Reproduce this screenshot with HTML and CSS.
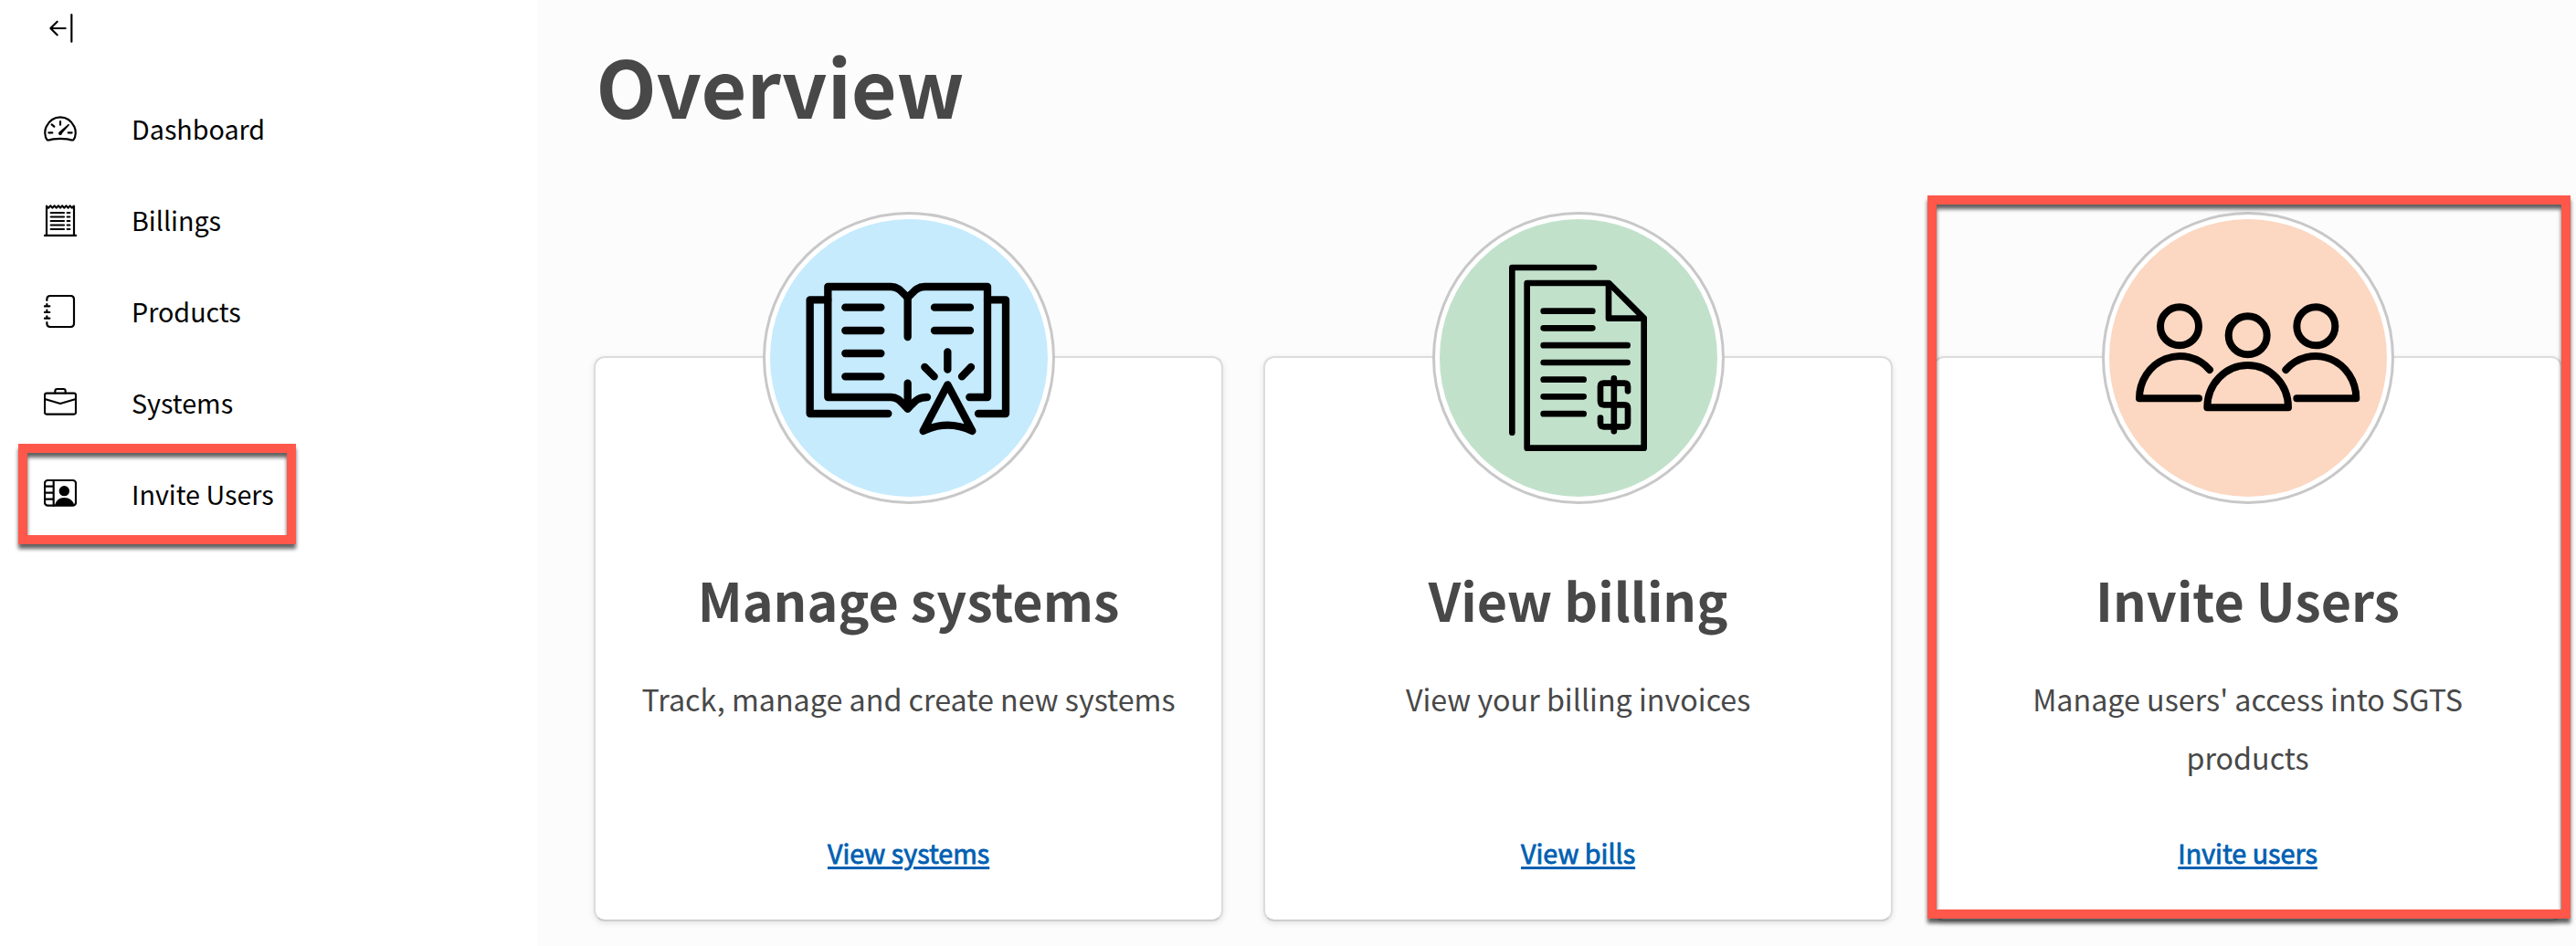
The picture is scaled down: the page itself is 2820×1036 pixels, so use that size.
FILE: index.html
```html
<!DOCTYPE html>
<html lang="en">
<head>
<meta charset="utf-8">
<title>Overview</title>
<link rel="stylesheet" href="styles.css">
</head>
<body>
<div class="layout">
  <aside class="sidebar">
    <button class="toggle" type="button" aria-label="Collapse menu">
      <svg class="nav-icon" viewBox="144 39 108 108"><path d="M215 93H166M188 71L166 93L188 115M235 48V137"/></svg>
    </button>
    <nav class="nav">
      <a class="nav-item">
        <svg class="nav-icon" viewBox="144 369 108 108">
          <path d="M155 460C146 450 146 428 152 416C162 396 179 385 198 385C217 385 234 396 244 416C250 428 250 450 241 460C237 462 228 458 222 457C206 455 190 455 174 457C168 458 159 462 155 460Z"/>
          <path d="M198 399V410M170 409L178 416M160 436H172M224 436H236"/>
          <path class="solid" d="M225 407Q230 408 227 412L204 438A6 6 0 1 1 195 433Z"/>
        </svg>
        <span>Dashboard</span>
      </a>
      <a class="nav-item">
        <svg class="nav-icon" viewBox="144 669 108 108">
          <path d="M153 773V677L159 683L166 676L172 683L179 676L185 683L192 676L198 683L204 676L211 683L217 676L224 683L230 676L236 683L243 677V773"/>
          <path d="M146 773.5H250M167 699H210M167 712.5H210M167 726H210M167 739.5H210M167 753H210M221 699H229M221 712.5H229M221 726H229M221 739.5H229M221 753H229"/>
        </svg>
        <span>Billings</span>
      </a>
      <a class="nav-item">
        <svg class="nav-icon" viewBox="144 969 108 108">
          <path d="M154 987V984Q154 972 166 972H231Q243 972 243 984V1062Q243 1074 231 1074H166Q154 1074 154 1062V1059"/>
          <path d="M146 1006H163M146 1026H163M146 1046H163M154 999V1005M154 1019V1025M154 1039V1045"/>
        </svg>
        <span>Products</span>
      </a>
      <a class="nav-item">
        <svg class="nav-icon" viewBox="144 309 108 108">
          <rect x="147" y="332" width="102" height="69" rx="6"/>
          <path d="M181 331V325Q181 318 188 318H208Q215 318 215 325V331M147 351L198 366L249 351"/>
        </svg>
        <span>Systems</span>
      </a>
      <a class="nav-item">
        <svg class="nav-icon" viewBox="144 609 108 108">
          <rect x="147" y="618" width="102" height="83" rx="10"/>
          <path d="M176 618V701M147 638H176M147 659H176M147 680H176"/>
          <circle class="solid" cx="211" cy="653" r="17"/>
          <path class="solid" d="M180 701C183 684 195 675 211 675C227 675 241 684 244 701Z"/>
        </svg>
        <span>Invite Users</span>
        <i class="highlight highlight-nav"></i>
      </a>
    </nav>
  </aside>

  <main class="main">
    <h1 class="title">Overview</h1>
    <div class="cards">
      <section class="card">
        <div class="badge">
          <svg class="art blue" viewBox="69 60 912 912">
            <g stroke-width="25">
              <path d="M521 318C500 297 490 282 466 282H259V645H466C490 645 498 660 521 683C544 660 552 645 585 645"/>
              <path d="M521 318C542 297 552 282 576 282H783V645H724"/>
              <path d="M521 318V447M521 599V683M259 325H200V699H457M783 325H843V699H753"/>
              <path d="M316 350H433M316 426H433M316 501H433M316 577H433M609 350H726M609 426H726"/>
              <path d="M652 496V554M577 546L608 577M729 546L699 577"/>
              <path d="M652 604L572 756Q652 718 733 756Z"/>
            </g>
          </svg>
        </div>
        <h2 class="card-title">Manage systems</h2>
        <p class="card-text">Track, manage and create new systems</p>
        <a class="card-link">View systems</a>
      </section>

      <section class="card">
        <div class="badge">
          <svg class="art green" viewBox="78 60 912 912">
            <g stroke-width="20">
              <path d="M585 219H316V761"/>
              <path d="M365 270H634L749 385V812H365ZM633 270V386H749"/>
              <path d="M419 362H580M419 418H580M419 474.500H695M419 531H695M419 587H551M419 643H551M419 699.500H551"/>
              <path d="M696 625V610Q696 599 685 599H617Q606 599 606 610V658Q606 670 617 670H685Q696 670 696 681V730Q696 742 685 742H617Q606 742 606 730V713M650.500 583V757"/>
            </g>
          </svg>
        </div>
        <h2 class="card-title">View billing</h2>
        <p class="card-text">View your billing invoices</p>
        <a class="card-link">View bills</a>
      </section>

      <section class="card">
        <div class="badge">
          <svg class="art peach" viewBox="656 120 912 912">
            <g stroke-width="24">
              <circle cx="887" cy="472" r="63"/>
              <circle cx="1111" cy="502" r="63"/>
              <circle cx="1335" cy="472" r="63"/>
              <path d="M978 739A133 139 0 0 1 1244 739Z"/>
              <path d="M950 709H755A133 139 0 0 1 986 615"/>
              <path d="M1272 709H1467A133 139 0 0 0 1236 615"/>
            </g>
          </svg>
        </div>
        <h2 class="card-title">Invite Users</h2>
        <p class="card-text">Manage users' access into SGTS products</p>
        <a class="card-link">Invite users</a>
        <i class="highlight highlight-card"></i>
      </section>
    </div>
  </main>
</div>
</body>
</html>
```
FILE: styles.css
```css
* { box-sizing: border-box; }

body {
  margin: 0;
  font-family: "Noto Sans CJK SC", "Noto Sans", sans-serif;
  color: #484848;
  background: #fff;
}

.layout {
  display: flex;
  height: 1036px;
  overflow: hidden;
}

.sidebar {
  flex: 0 0 588px;
  color: #000;
}

.toggle {
  display: block;
  height: 91px;
  padding: 13px 48px 42px;
  border: 0;
  background: none;
}

.nav-icon {
  display: block;
  flex: none;
  width: 36px;
  height: 36px;
  fill: none;
  stroke: #000;
  stroke-width: 6.5;
  stroke-linecap: round;
  stroke-linejoin: round;
}

.nav-icon .solid { fill: #000; stroke: none; }

.nav-item {
  position: relative;
  display: flex;
  align-items: center;
  gap: 60px;
  height: 100px;
  padding-left: 48px;
  font-size: 28.7px;
  line-height: 40px;
}

.highlight {
  position: absolute;
  border: 10px solid #ff584a;
  filter: drop-shadow(0 5px 2px rgba(0, 0, 0, .62));
}

.highlight-nav { left: 20px; top: -5px; width: 304px; height: 110px; }
.highlight-card { left: -8.4px; top: -178px; width: 704px; height: 792px; }

.main {
  flex: 1;
  padding: 43px 15px 0 62.4px;
  background: #fcfcfc;
}

.title {
  margin: 0 0 247px 2px;
  font-size: 86px;
  line-height: 100px;
  font-weight: 700;
}

.cards {
  display: grid;
  grid-template-columns: repeat(3, 688.4px);
  gap: 44.6px;
}

.card {
  position: relative;
  display: flex;
  flex-direction: column;
  align-items: center;
  height: 619px;
  padding: 0 48px;
  border: 2px solid #dcdcdc;
  border-bottom-color: #cdcdcd;
  border-radius: 12px;
  background: #fff;
  box-shadow: 0 2px 6px rgba(0, 0, 0, .1);
  text-align: center;
}

.badge {
  flex: none;
  width: 320px;
  height: 320px;
  margin-top: -160px;
  padding: 5px;
  border: 3px solid #c8c8c8;
  border-radius: 50%;
  background: #fff;
}

.art {
  display: block;
  width: 100%;
  height: 100%;
  border-radius: 50%;
  fill: none;
  stroke: #000;
  stroke-linecap: round;
  stroke-linejoin: round;
}

.blue { background: #c5ebfd; }
.green { background: #c2e1cb; }
.peach { background: #fcd7c1; }

.card-title {
  margin: 64px 0 37px;
  font-size: 57.4px;
  line-height: 80px;
  font-weight: 700;
}

.card-text {
  min-height: 128px;
  margin: 0 0 49px;
  font-size: 32.25px;
  line-height: 64px;
}

.card-link {
  color: #005fb2;
  font-size: 28.7px;
  line-height: 48px;
  -webkit-text-stroke: .8px #005fb2;
  text-decoration: underline;
  text-decoration-thickness: 3px;
  text-underline-offset: 3px;
}
```
